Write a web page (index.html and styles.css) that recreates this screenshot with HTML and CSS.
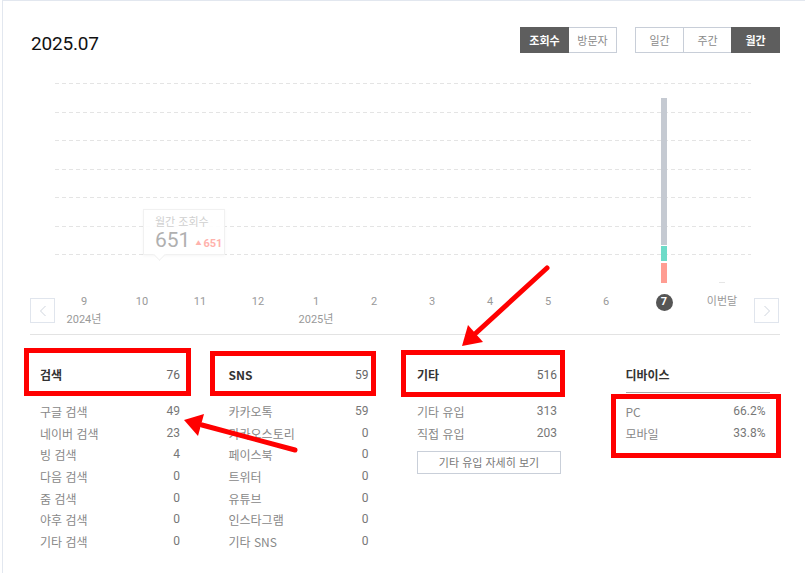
FILE: index.html
```html
<!DOCTYPE html>
<html lang="ko">
<head>
<meta charset="utf-8">
<title>월간 통계</title>
<link rel="stylesheet" href="styles.css">
</head>
<body>
<div class="card">
  <div class="head">
    <h1 class="title">2025.07</h1>
    <div class="toggles">
      <div class="seg">
        <span class="btn on">조회수</span>
        <span class="btn">방문자</span>
      </div>
      <div class="seg">
        <span class="btn">일간</span>
        <span class="btn">주간</span>
        <span class="btn on">월간</span>
      </div>
    </div>
  </div>

  <div class="plot">
    <div class="grid">
      <div class="gl"></div><div class="gl"></div><div class="gl"></div><div class="gl"></div>
      <div class="gl"></div><div class="gl"></div><div class="gl"></div>
    </div>
    <div class="bars">
      <div class="col"></div><div class="col"></div><div class="col"></div><div class="col"></div>
      <div class="col"></div><div class="col"></div><div class="col"></div><div class="col"></div>
      <div class="col"></div><div class="col"></div>
      <div class="col">
        <div class="stack">
          <div class="seg-gray"></div>
          <div class="seg-teal"></div>
          <div class="seg-red"></div>
        </div>
      </div>
      <div class="col"><div class="stub"></div></div>
    </div>
    <div class="tip">
      <div class="tip-label">월간 조회수</div>
      <div class="tip-row"><span class="tip-val">651</span><span class="tip-diff"><span class="tri">▲</span>651</span></div>
    </div>
  </div>

  <div class="axis">
    <span class="nav"><svg width="8" height="12" viewBox="0 0 8 12"><path d="M6.5 1 L1.5 6 L6.5 11" fill="none" stroke="#cfd5de" stroke-width="1"/></svg></span>
    <div class="months">
      <div class="m"><span class="mn">9</span><span class="yr">2024년</span></div>
      <div class="m"><span class="mn">10</span></div>
      <div class="m"><span class="mn">11</span></div>
      <div class="m"><span class="mn">12</span></div>
      <div class="m"><span class="mn">1</span><span class="yr">2025년</span></div>
      <div class="m"><span class="mn">2</span></div>
      <div class="m"><span class="mn">3</span></div>
      <div class="m"><span class="mn">4</span></div>
      <div class="m"><span class="mn">5</span></div>
      <div class="m"><span class="mn">6</span></div>
      <div class="m"><span class="mn cur">7</span></div>
      <div class="m"><span class="mn">이번달</span></div>
    </div>
    <span class="nav next"><svg width="8" height="12" viewBox="0 0 8 12"><path d="M1.5 1 L6.5 6 L1.5 11" fill="none" stroke="#cfd5de" stroke-width="1"/></svg></span>
  </div>

  <div class="stats">
    <div class="sc">
      <div class="sh"><span class="sh-t">검색</span><span class="sh-n">76</span></div>
      <ul class="list">
        <li><span>구글 검색</span><span class="num">49</span></li>
        <li><span>네이버 검색</span><span class="num">23</span></li>
        <li><span>빙 검색</span><span class="num">4</span></li>
        <li><span>다음 검색</span><span class="num">0</span></li>
        <li><span>줌 검색</span><span class="num">0</span></li>
        <li><span>야후 검색</span><span class="num">0</span></li>
        <li><span>기타 검색</span><span class="num">0</span></li>
      </ul>
    </div>
    <div class="sc">
      <div class="sh"><span class="sh-t">SNS</span><span class="sh-n">59</span></div>
      <ul class="list">
        <li><span>카카오톡</span><span class="num">59</span></li>
        <li><span>카카오스토리</span><span class="num">0</span></li>
        <li><span>페이스북</span><span class="num">0</span></li>
        <li><span>트위터</span><span class="num">0</span></li>
        <li><span>유튜브</span><span class="num">0</span></li>
        <li><span>인스타그램</span><span class="num">0</span></li>
        <li><span>기타 SNS</span><span class="num">0</span></li>
      </ul>
    </div>
    <div class="sc">
      <div class="sh"><span class="sh-t">기타</span><span class="sh-n">516</span></div>
      <ul class="list">
        <li><span>기타 유입</span><span class="num">313</span></li>
        <li><span>직접 유입</span><span class="num">203</span></li>
      </ul>
      <button class="more" type="button">기타 유입 자세히 보기</button>
    </div>
    <div class="sc device">
      <div class="sh"><span class="sh-t">디바이스</span></div>
      <ul class="list">
        <li><span>PC</span><span class="num">66.2%</span></li>
        <li><span>모바일</span><span class="num">33.8%</span></li>
      </ul>
    </div>
  </div>
</div>

<svg class="notes" width="805" height="573" viewBox="0 0 805 573">
  <g fill="none" stroke="#ff0000" stroke-width="5">
    <rect x="26.5" y="350.5" width="162" height="43"/>
    <rect x="212.5" y="353.5" width="161" height="40"/>
    <rect x="403.5" y="352.5" width="159" height="42"/>
    <rect x="613.5" y="396.5" width="165" height="59"/>
  </g>
  <g stroke="#ff0000" stroke-width="5" stroke-linecap="round">
    <line x1="547" y1="268" x2="476" y2="333"/>
    <line x1="295" y1="450" x2="202" y2="425"/>
  </g>
  <g fill="#ff0000">
    <polygon points="462,346 483,342 468,325"/>
    <polygon points="184,420 204,414 198,436"/>
  </g>
</svg>
</body>
</html>
```

FILE: styles.css
```css
* { box-sizing: border-box; }

html, body {
  margin: 0;
  padding: 0;
  background: #ffffff;
}

body {
  font-family: Roboto, "Noto Sans CJK KR", sans-serif;
  color: #333;
  position: relative;
  width: 805px;
  height: 573px;
  overflow: hidden;
}

.card {
  margin-left: 2px;
  width: 810px;
  min-height: 573px;
  border-top: 1px solid #e2e7ef;
  border-left: 1px solid #e2e7ef;
  padding: 26px 30px 0 27px;
}

/* header */
.head {
  display: flex;
  justify-content: space-between;
  align-items: flex-start;
  width: 750px;
  height: 26px;
}

.title {
  margin: 6px 0 0 1px;
  font-size: 19px;
  line-height: 22px;
  font-weight: 400;
  color: #111;
  letter-spacing: -0.2px;
}

.toggles {
  display: flex;
  gap: 18px;
}

.seg {
  display: flex;
}

.btn {
  width: 49px;
  height: 26px;
  display: flex;
  align-items: center;
  justify-content: center;
  font-family: "Noto Sans CJK KR", sans-serif;
  font-size: 11px;
  color: #8a8a8a;
  border: 1px solid #c8ced8;
  margin-left: -1px;
  background: #fff;
}

.seg .btn:first-child { margin-left: 0; }

.btn.on {
  background: #5e5e5e;
  border-color: #5e5e5e;
  color: #fff;
  font-weight: 700;
  position: relative;
}

/* chart */
.plot {
  position: relative;
  margin: 30px 0 0 25px;
  width: 696px;
  height: 200px;
}

.grid {
  display: flex;
  flex-direction: column;
  height: 100%;
}

.gl {
  flex: 1;
  background-image: repeating-linear-gradient(to right, #e4e4e4 0 4px, transparent 4px 7px);
  background-size: 100% 1px;
  background-repeat: no-repeat;
}

.bars {
  position: absolute;
  inset: 0;
  display: flex;
}

.col {
  width: 58px;
  display: flex;
  flex-direction: column;
  justify-content: flex-end;
  align-items: center;
}

.stack {
  width: 6px;
  display: flex;
  flex-direction: column;
}

.seg-gray { height: 147px; background: #c5cad2; }
.seg-teal { height: 15px; margin-top: 1px; background: #6edbc8; }
.seg-red { height: 20px; margin-top: 2px; background: #ff9d92; }

.stub {
  width: 6px;
  height: 1px;
  background: #e6e6e6;
}

.tip {
  position: absolute;
  left: 88px;
  top: 126px;
  width: 82px;
  height: 46px;
  background: rgba(255, 255, 255, 0.9);
  border: 1px solid #f1f1f1;
  box-shadow: 0 1px 3px rgba(0, 0, 0, 0.04);
  padding: 4px 0 0 11px;
}

.tip::after {
  content: "";
  position: absolute;
  left: 11px;
  bottom: -5px;
  width: 8px;
  height: 8px;
  background: #fff;
  border-right: 1px solid #f1f1f1;
  border-bottom: 1px solid #f1f1f1;
  transform: rotate(45deg);
}

.tip-label {
  font-family: "Noto Sans CJK KR", sans-serif;
  font-size: 11px;
  line-height: 14px;
  color: #cfcfcf;
}

.tip-row {
  display: flex;
  align-items: baseline;
  gap: 5px;
}

.tip-val {
  font-size: 21px;
  line-height: 24px;
  color: #b0b0b0;
}

.tip-diff {
  font-size: 11px;
  font-weight: 700;
  color: #ffb2ac;
}

.tri {
  font-size: 6px;
  margin-right: 2px;
  vertical-align: 2px;
}

/* axis */
.axis {
  display: flex;
  align-items: flex-start;
  margin-top: 11px;
  padding-bottom: 7px;
  width: 750px;
  border-bottom: 1px solid #e3e3e3;
}

.nav {
  width: 25px;
  height: 25px;
  margin-top: 4px;
  border: 1px solid #e0e5ed;
  display: flex;
  align-items: center;
  justify-content: center;
}

.nav.next { margin-left: 3px; }

.months {
  display: flex;
}

.m {
  width: 58px;
  height: 33px;
  display: flex;
  flex-direction: column;
  align-items: center;
  font-family: Roboto, "Noto Sans CJK KR", sans-serif;
  font-size: 11px;
  color: #999;
}

.mn {
  height: 16px;
  line-height: 16px;
}

.mn.cur {
  width: 17px;
  height: 17px;
  margin-top: -0.5px;
  border-radius: 50%;
  background: #555;
  color: #fff;
  font-weight: 700;
  display: flex;
  align-items: center;
  justify-content: center;
}

.yr {
  line-height: 17px;
  margin-top: 1px;
}

/* stats */
.stats {
  display: flex;
  align-items: flex-start;
  gap: 44.5px;
  padding: 31px 0 0 10px;
}

.sc {
  width: 144px;
  flex: none;
}

.sc.device { margin-left: 20px; }

.sh {
  display: flex;
  justify-content: space-between;
  align-items: center;
  height: 27px;
  padding: 0 4px 8px 0;
  border-bottom: 1px solid #a8a8a8;
}

.sh-t {
  font-family: "Noto Sans CJK KR", sans-serif;
  font-size: 12px;
  font-weight: 700;
  color: #333;
  line-height: 18px;
}

.sh-n {
  font-size: 12px;
  color: #666;
  line-height: 18px;
}

.list {
  list-style: none;
  margin: 0;
  padding: 8px 0 0 0;
}

.list li {
  display: flex;
  justify-content: space-between;
  height: 21.7px;
  line-height: 21.7px;
  padding-right: 4px;
  font-family: "Noto Sans CJK KR", sans-serif;
  font-size: 12px;
  color: #888;
}

.list .num {
  font-family: Roboto, sans-serif;
  color: #777;
}

.more {
  display: block;
  width: 144px;
  height: 23px;
  margin-top: 7px;
  padding: 0;
  border: 1px solid #c9cfd9;
  background: #fff;
  font-family: "Noto Sans CJK KR", sans-serif;
  font-size: 11px;
  color: #777;
  line-height: 21px;
  text-align: center;
}

/* annotations */
.notes {
  position: absolute;
  left: 0;
  top: 0;
  pointer-events: none;
}
```
